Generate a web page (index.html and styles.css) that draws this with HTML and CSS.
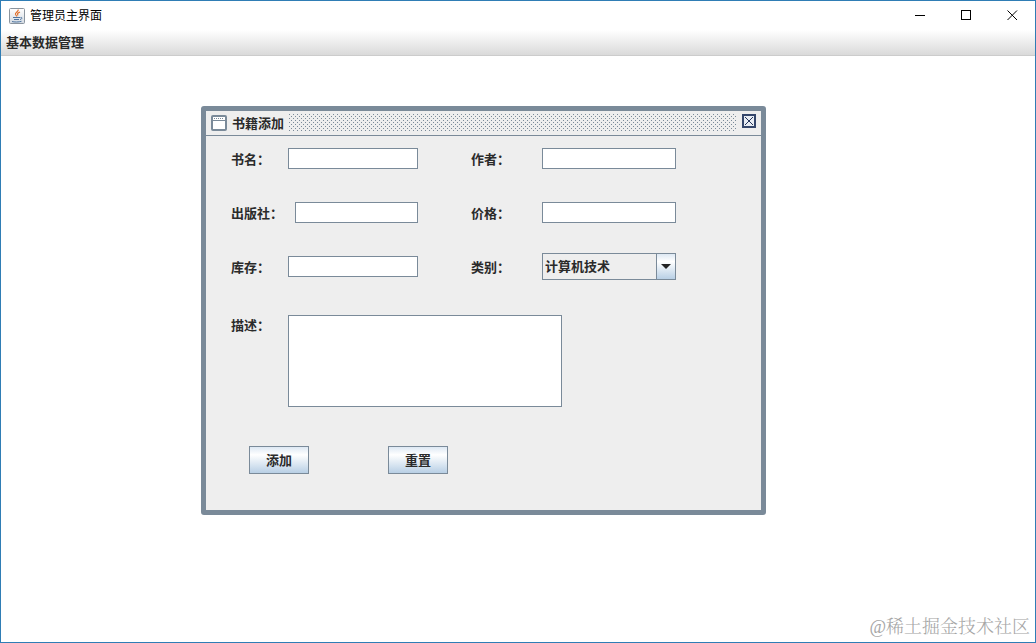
FILE: index.html
```html
<!DOCTYPE html>
<html lang="zh-CN">
<head>
<meta charset="utf-8">
<title>管理员主界面</title>
<link rel="stylesheet" href="styles.css">
</head>
<body>
<div class="window">
  <header class="titlebar">
    <svg class="app-icon" width="16" height="16" viewBox="0 0 16 16" fill="none">
      <defs><linearGradient id="tile" x1="0" y1="0" x2="0" y2="1"><stop offset="0" stop-color="#fff"/><stop offset="1" stop-color="#d3dae2"/></linearGradient></defs>
      <rect x=".5" y=".5" width="15" height="15" rx="1" fill="url(#tile)" stroke="#8a949e"/>
      <path d="M9 1.500C10.500 3.500 5.500 4.500 6.500 6.500L8 8.500M11 4C8.500 5 8 5.500 9 7.500" stroke="#e0702c" stroke-width="1.200"/>
      <path d="M4 9.500h7M5 11.500h5M3 13.500c2 .7 7 .7 9.500-.2M11.500 9.500c2-.5 2 1.500-.5 2" stroke="#4f75a0"/>
    </svg>
    <h1 class="window-title">管理员主界面</h1>
    <div class="window-controls">
      <button class="control" type="button" aria-label="最小化"><svg width="11" height="11" viewBox="0 0 11 11"><path d="M0 5.500h10" stroke="#000"/></svg></button>
      <button class="control" type="button" aria-label="最大化"><svg width="11" height="11" viewBox="0 0 11 11"><rect x=".5" y=".5" width="9" height="9" fill="none" stroke="#000"/></svg></button>
      <button class="control" type="button" aria-label="关闭"><svg width="11" height="11" viewBox="0 0 11 11"><path d="M.5.5l9.500 9.500M10 .5L.5 10" stroke="#000"/></svg></button>
    </div>
  </header>
  <nav class="menubar"><button class="menu" type="button">基本数据管理</button></nav>
  <main class="desktop">
    <section class="frame" aria-labelledby="frame-title">
      <div class="frame-bar">
        <svg class="frame-icon" width="16" height="16" viewBox="0 0 16 16">
          <rect x="1" y="1" width="14" height="14" rx="1" fill="#fff" stroke="#7a8a99" stroke-width="2"/>
          <path d="M2 5.500h12" stroke="#7a8a99"/>
          <path d="M3 3.500h10" stroke="#7a8a99" stroke-dasharray="1 1"/>
        </svg>
        <h2 class="frame-title" id="frame-title">书籍添加</h2>
        <svg class="grip" height="18" aria-hidden="true">
          <defs><pattern id="dots" width="4" height="4" patternUnits="userSpaceOnUse"><path d="M0 0h1v1H0zM2 2h1v1H2z" fill="#7a8a99"/></pattern></defs>
          <rect width="100%" height="18" fill="url(#dots)"/>
        </svg>
        <button class="frame-close" type="button" aria-label="关闭"><svg width="14" height="14" viewBox="0 0 14 14"><rect x="1" y="1" width="12" height="12" fill="#e8edf4" stroke="#34466b" stroke-width="2"/><path d="M3 3l8 8M11 3l-8 8" stroke="#26355a"/></svg></button>
      </div>
      <form class="form">
        <div class="row">
          <div class="field left"><label for="name">书名：</label><input class="text" id="name" type="text"></div>
          <div class="field right"><label for="author">作者：</label><input class="text" id="author" type="text"></div>
        </div>
        <div class="row">
          <div class="field left wide-label"><label for="press">出版社：</label><input class="text" id="press" type="text"></div>
          <div class="field right"><label for="price">价格：</label><input class="text" id="price" type="text"></div>
        </div>
        <div class="row">
          <div class="field left"><label for="stock">库存：</label><input class="text" id="stock" type="text"></div>
          <div class="field right"><label for="type">类别：</label>
            <div class="combo"><select id="type"><option>计算机技术</option></select><span class="combo-arrow" aria-hidden="true"><svg width="10" height="5" viewBox="0 0 10 5"><path d="M0 0h10L5 5z" fill="#222"/></svg></span></div>
          </div>
        </div>
        <div class="field description"><label for="desc">描述：</label><textarea id="desc"></textarea></div>
        <div class="actions"><button class="action" type="button">添加</button><button class="action" type="reset">重置</button></div>
      </form>
    </section>
    <p class="watermark">@稀土掘金技术社区</p>
  </main>
</div>
</body>
</html>
```
FILE: styles.css
```css
* { box-sizing: border-box; }

body {
  margin: 0;
  color: #2a2a2a;
  font: bold 13px/18px "Liberation Sans", "Noto Sans CJK SC", sans-serif;
}

button, input, select, textarea { font: inherit; color: inherit; margin: 0; padding: 0; }

.window {
  display: flex;
  flex-direction: column;
  min-height: 100vh;
  border: 1px solid #2f7db5;
  background: #fff;
}

.titlebar { display: flex; align-items: center; height: 29px; padding-left: 8px; gap: 5px; }
.window-title { flex: 1; margin: 0; color: #000; font-size: 12px; font-weight: normal; }
.window-controls { display: flex; }
.control {
  display: grid;
  place-items: center;
  width: 46px;
  height: 28px;
  border: 0;
  background: none;
}

.menubar {
  display: flex;
  align-items: center;
  height: 26px;
  padding: 0 5px;
  border-bottom: 1px solid #ccc;
  background: linear-gradient(#fff, #dadada);
}
.menu { border: 0; background: none; }

.desktop { position: relative; flex: 1; }

.frame {
  position: absolute;
  left: 200px;
  top: 50px;
  width: 565px;
  border: 5px solid #7a8a99;
  border-radius: 3px;
  background: #eee;
}

.frame-bar {
  display: flex;
  align-items: center;
  height: 25px;
  padding: 0 5px;
  gap: 5px;
  border-bottom: 1px solid #7a8a99;
}
.frame-title { margin: 0; padding-top: 2px; font-size: 13px; line-height: 18px; }
.grip { flex: 1; min-width: 0; }
.frame-close { height: 14px; margin-bottom: 4px; border: 0; background: none; line-height: 0; }

.form { padding: 9px 25px 36px; }
.row { display: flex; gap: 53px; margin-bottom: 27px; }
.field { display: grid; align-items: center; min-height: 27px; }
.field label { padding-top: 2px; }
.left { grid-template-columns: 57px 130px; }
.wide-label { grid-template-columns: 64px 123px; }
.right { grid-template-columns: 71px 134px; }

.text {
  width: 100%;
  height: 21px;
  padding: 0 2px;
  border: 1px solid #7a8a99;
  background: #fff;
}

.combo { position: relative; height: 27px; }
.combo select {
  appearance: none;
  width: 100%;
  height: 27px;
  padding: 1px 22px 0 2px;
  border: 1px solid #7a8a99;
  border-radius: 0;
  background: #eee;
}
.combo-arrow {
  position: absolute;
  top: 0;
  right: 0;
  display: grid;
  place-items: center;
  width: 20px;
  height: 27px;
  border: 1px solid #7a8a99;
  background: linear-gradient(#dde8f3, #fff 30%, #b8cfe5);
  pointer-events: none;
}

.description { grid-template-columns: 57px 274px; align-items: start; padding-top: 8px; }
.description textarea {
  height: 92px;
  padding: 2px;
  border: 1px solid #7a8a99;
  border-radius: 0;
  background: #fff;
  resize: none;
}

.actions { display: flex; gap: 79px; padding: 39px 18px 0; }
.action {
  width: 60px;
  height: 28px;
  padding-top: 1px;
  border: 1px solid #7a8a99;
  background: linear-gradient(#dde8f3, #fff 30%, #b8cfe5);
}

.watermark {
  position: absolute;
  right: 5px;
  bottom: 3px;
  margin: 0;
  color: #a5a5a5;
  font: 300 18px/24px "Liberation Serif", "Noto Serif CJK SC", "Noto Sans CJK SC", serif;
}
```
